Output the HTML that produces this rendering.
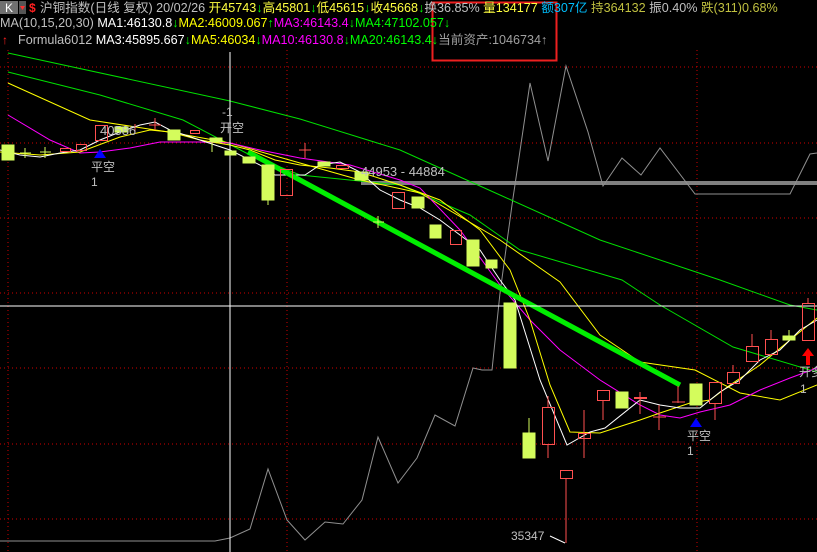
<!DOCTYPE html>
<html><head><meta charset="utf-8"><style>
html,body{margin:0;padding:0;background:#000;width:817px;height:552px;overflow:hidden;font-family:"Liberation Sans","Noto Sans CJK SC",sans-serif;}
svg{position:absolute;left:0;top:0}
.t{font-family:"Liberation Sans","Noto Sans CJK SC",sans-serif;font-size:12px}
.h{font-size:12.6px}
</style></head><body>
<svg width="817" height="552" viewBox="0 0 817 552">
<g stroke="#d00000" stroke-width="1" stroke-dasharray="1,3">
<line x1="0" y1="67" x2="817" y2="67"/><line x1="0" y1="143" x2="817" y2="143"/><line x1="0" y1="218" x2="817" y2="218"/><line x1="0" y1="293" x2="817" y2="293"/><line x1="0" y1="368" x2="817" y2="368"/><line x1="0" y1="444" x2="817" y2="444"/><line x1="0" y1="519" x2="817" y2="519"/>
<line x1="8" y1="50" x2="8" y2="552"/><line x1="287" y1="50" x2="287" y2="552"/><line x1="697" y1="50" x2="697" y2="552"/>
</g>
<rect x="361" y="181" width="456" height="4" fill="#808080"/>
<polyline fill="none" stroke="#909090" stroke-width="1" points="0,541 215,541 230,538 250,529 268,469 287,520 305,540 325,522 343,524 362,500 378,437 398,483 417,458 435,415 455,426 473,368 482,370 492,370 500,293 512,205 530,83 548,161 566,66 588,132 603,186 622,158 641,175 660,148 695,194 790,194 810,154 817,153"/>
<g fill="none" stroke-width="1">
<polyline stroke="#00e000" points="8,53 230,101 300,119 400,150 500,195 600,240 720,280 790,305 817,310"/>
<polyline stroke="#00e000" points="8,72 100,95 183,120 250,155 300,175 400,185 470,215 520,250 622,280 660,305 733,347 817,372"/>
<polyline stroke="#ffff00" points="8,83 90,120 175,133 230,143 300,163 360,180 420,193 500,240 560,282 600,335 640,362 695,370 740,393 780,400 817,385"/>
<polyline stroke="#ff00ff" points="8,115 50,140 80,153 100,152 130,148 160,142 200,142 230,143 260,150 300,158 350,165 400,180 420,188 460,230 500,285 530,320 560,350 600,380 640,405 660,415 680,418 700,412 730,405 760,390 790,378 817,368"/>
<polyline stroke="#ffff00" points="0,152 40,155 80,152 120,137 150,130 170,132 200,140 230,145 250,150 275,160 300,165 330,168 360,172 400,185 440,200 480,230 510,270 530,320 550,385 570,432 600,433 640,420 660,413 690,403 710,400 730,385 760,365 790,340 817,318"/>
<polyline stroke="#ffffff" points="0,150 20,155 40,157 60,153 80,150 100,140 120,132 140,125 155,122 170,130 200,140 230,150 260,165 275,175 290,175 305,175 320,165 340,162 360,172 380,190 400,200 420,208 440,220 460,235 480,250 500,280 515,300 540,380 567,445 590,432 605,428 640,400 660,405 680,408 700,408 720,392 740,380 760,360 780,350 800,330 817,320"/>
</g>
<line x1="248" y1="152" x2="680" y2="385" stroke="#00ee00" stroke-width="5"/>
<line x1="230" y1="52" x2="230" y2="552" stroke="#fff"/>
<line x1="0" y1="306" x2="817" y2="306" stroke="#fff"/>
<g fill="#d4fc5c" stroke="#d4fc5c">
<rect x="2" y="145" width="12" height="15"/><line x1="25" y1="148" x2="25" y2="158"/><line x1="20" y1="153" x2="31" y2="153"/><line x1="45" y1="147" x2="45" y2="158"/><line x1="40" y1="152" x2="51" y2="152"/>
<rect x="115" y="127" width="13" height="5"/><rect x="168" y="130" width="12" height="10"/><rect x="210" y="138" width="12" height="4"/><line x1="212" y1="142" x2="212" y2="152"/>
<rect x="225" y="151" width="11" height="4"/><rect x="243" y="157" width="12" height="6"/><rect x="262" y="165" width="12" height="35"/><line x1="268" y1="200" x2="268" y2="205"/>
<rect x="318" y="162" width="12" height="4"/><rect x="355" y="172" width="13" height="8"/><line x1="378" y1="216" x2="378" y2="228"/><line x1="373" y1="222" x2="384" y2="222"/>
<rect x="412" y="197" width="12" height="11"/><rect x="430" y="225" width="11" height="13"/><rect x="467" y="240" width="12" height="26"/><rect x="486" y="260" width="11" height="8"/>
<rect x="504" y="303" width="12" height="65"/><rect x="523" y="433" width="12" height="25"/><line x1="529" y1="418" x2="529" y2="433"/>
<rect x="616" y="392" width="12" height="16"/><rect x="690" y="384" width="12" height="21"/><rect x="783" y="336" width="12" height="4"/><line x1="789" y1="330" x2="789" y2="336"/>
</g>
<g fill="none" stroke="#ff5050">
<rect x="60.5" y="148.5" width="10" height="3"/><rect x="76.5" y="144.5" width="10" height="6"/><rect x="95.5" y="125.5" width="12" height="15"/><line x1="135" y1="124" x2="135" y2="134"/><line x1="155" y1="118" x2="155" y2="130"/><line x1="149" y1="125" x2="161" y2="125"/><rect x="190.5" y="130.5" width="9" height="3"/>
<rect x="280.5" y="169.5" width="12" height="26"/><line x1="305" y1="143" x2="305" y2="158"/><line x1="299" y1="150" x2="311" y2="150"/><rect x="336.5" y="165.5" width="12" height="3"/>
<rect x="392.5" y="192.5" width="12" height="16"/><rect x="450.5" y="230.5" width="11" height="14"/>
<rect x="542.5" y="407.5" width="12" height="37"/><line x1="548" y1="396" x2="548" y2="407"/><line x1="548" y1="444" x2="548" y2="458"/>
<rect x="560.5" y="470.5" width="12" height="8"/><line x1="566" y1="478" x2="566" y2="543"/>
<rect x="578.5" y="433.5" width="12" height="5"/><line x1="584" y1="410" x2="584" y2="458"/>
<rect x="597.5" y="390.5" width="12" height="10"/><line x1="603" y1="400" x2="603" y2="420"/>
<line x1="634" y1="398" x2="647" y2="398" stroke-width="2"/><line x1="640" y1="392" x2="640" y2="414"/>
<line x1="653" y1="417" x2="666" y2="417"/><line x1="659" y1="405" x2="659" y2="430"/>
<line x1="672" y1="402" x2="685" y2="402"/><line x1="678" y1="386" x2="678" y2="403"/>
<rect x="709.5" y="382.5" width="12" height="21"/><line x1="715" y1="403" x2="715" y2="420"/>
<rect x="727.5" y="372.5" width="12" height="11"/><line x1="733" y1="365" x2="733" y2="372"/>
<rect x="746.5" y="346.5" width="12" height="15"/><line x1="752" y1="334" x2="752" y2="346"/>
<rect x="765.5" y="339.5" width="12" height="15"/><line x1="771" y1="330" x2="771" y2="339"/>
<rect x="802.5" y="303.5" width="12" height="37"/><line x1="808" y1="298" x2="808" y2="303"/>
</g>
<polygon points="100,149 94,158 106,158" fill="#0000ff"/>
<polygon points="696,418 690,427 702,427" fill="#0000ff"/>
<polygon points="808,348 802,356 806,356 806,365 810,365 810,356 814,356" fill="#ff0000"/>
<g class="t" fill="#c0c0c0" font-size="11">
<text x="100" y="135" font-size="13">40586</text>
<text x="222" y="116">-1</text><text x="220" y="132">开空</text>
<text x="91" y="171">平空</text><text x="91" y="186">1</text>
<text x="361" y="176" font-size="13">44953 - 44884</text>
<text x="511" y="540" font-size="12">35347</text>
<text x="687" y="440">平空</text><text x="687" y="455">1</text>
<text x="799" y="376">开多</text><text x="800" y="393">1</text>
</g>
<line x1="550" y1="536" x2="565" y2="543" stroke="#fff"/>
<rect x="432.5" y="2.5" width="124" height="58" fill="none" stroke="#ee2020" stroke-width="2"/>
<rect x="0" y="1" width="18" height="13" fill="#707070"/><text x="5" y="12" class="t" fill="#fff" font-size="11">K</text>
<rect x="19" y="1" width="7" height="13" fill="#555"/><polygon points="20,6 25,6 22.5,10" fill="#ff3030"/>
<text x="29" y="12" class="t" fill="#ff2020" font-weight="bold">$</text>
<text x="40" y="12" class="t h"><tspan fill="#c0c0c0">沪铜指数(日线 复权) 20/02/26 </tspan><tspan fill="#ffff40">开45743</tspan><tspan fill="#00ff00">↓</tspan><tspan fill="#ffff40">高45801</tspan><tspan fill="#00ff00">↓</tspan><tspan fill="#ffff40">低45615</tspan><tspan fill="#00ff00">↓</tspan><tspan fill="#ffff40">收45668</tspan><tspan fill="#00ff00">↓</tspan><tspan fill="#c0c0c0">换36.85% </tspan><tspan fill="#ffff40">量134177 </tspan><tspan fill="#00c0ff">额307亿 </tspan><tspan fill="#c0c040">持364132 </tspan><tspan fill="#c0c0c0">振0.40% </tspan><tspan fill="#c0c040">跌(311)0.68%</tspan></text>
<text x="0" y="27" class="t h"><tspan fill="#c0c0c0">MA(10,15,20,30) </tspan><tspan fill="#ffffff">MA1:46130.8</tspan><tspan fill="#00ff00">↓</tspan><tspan fill="#ffff00">MA2:46009.067</tspan><tspan fill="#00ff00">↑</tspan><tspan fill="#ff00ff">MA3:46143.4</tspan><tspan fill="#00ff00">↓MA4:47102.057↓</tspan></text>
<text x="2" y="44" class="t" fill="#ff2020">↑</text>
<text x="18" y="44" class="t h"><tspan fill="#c0c0c0">Formula6012 </tspan><tspan fill="#ffffff">MA3:45895.667</tspan><tspan fill="#00ff00">↓</tspan><tspan fill="#ffff00">MA5:46034</tspan><tspan fill="#00ff00">↓</tspan><tspan fill="#ff00ff">MA10:46130.8</tspan><tspan fill="#00ff00">↓</tspan><tspan fill="#00ff00">MA20:46143.4↓</tspan><tspan fill="#a0a0a0">当前资产:1046734↑</tspan></text>
</svg>
</body></html>
